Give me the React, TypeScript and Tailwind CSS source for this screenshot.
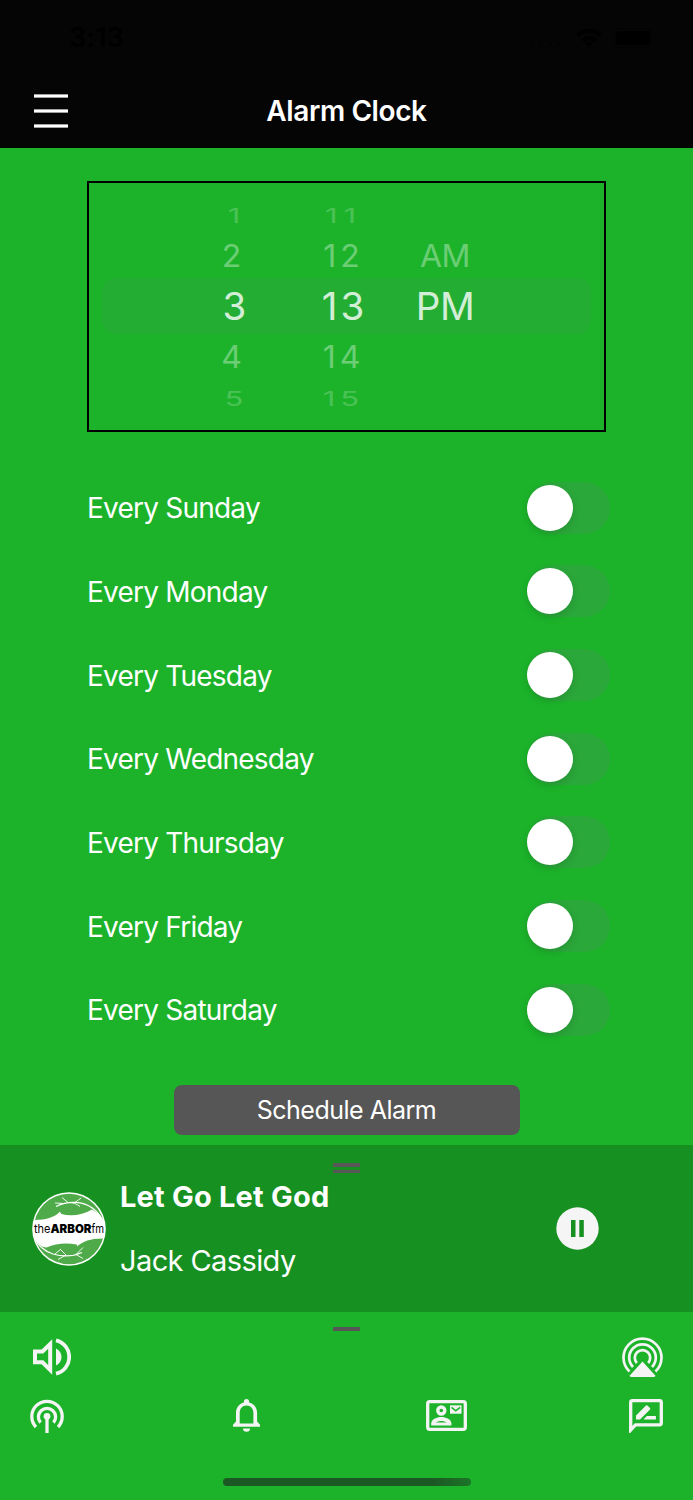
import { useState } from 'react';
import clsx from 'clsx';

const days = ['Sunday', 'Monday', 'Tuesday', 'Wednesday', 'Thursday', 'Friday', 'Saturday'];

const pickerRows = [
  { hour: '1', minute: '11', period: '', row: 'h-[30px] text-[31px] opacity-20', squash: 'scale-y-[0.66]', hourShift: 'pr-[2px]', minuteShift: 'tracking-[6px] pl-[1px]' },
  { hour: '2', minute: '12', period: 'AM', row: 'h-[51px] text-[32px] opacity-35', squash: 'scale-y-[0.97]', hourShift: 'pr-[7px]', minuteShift: 'tracking-[4px] pl-[1px]' },
  { hour: '3', minute: '13', period: 'PM', row: 'h-[50px] text-[38.5px] opacity-80', squash: 'scale-y-100', hourShift: 'pr-[1px]', minuteShift: 'tracking-[3px] pl-[3px]' },
  { hour: '4', minute: '14', period: '', row: 'h-[52px] text-[32px] opacity-35', squash: 'scale-y-[0.97]', hourShift: 'pr-[7px]', minuteShift: 'tracking-[4px] pl-[1px]' },
  { hour: '5', minute: '15', period: '', row: 'h-[29px] text-[31px] opacity-20', squash: 'scale-y-[0.66]', hourShift: 'pr-[2px]', minuteShift: 'tracking-[5px] pl-[1px]' },
];

const StatusBar = () => (
  <div className="flex h-[75px] items-center justify-between pl-[69px] pr-[36px] text-black">
    <span className="text-[27px] font-semibold leading-none tracking-[0.2px]">3:13</span>
    <div className="flex items-center gap-[12px]">
      <svg width="43" height="4" viewBox="0 0 43 4" fill="currentColor" fillOpacity="0.5" className="mt-[14px] -mr-[2px]">
        <circle cx="9" cy="2" r="1.800" />
        <circle cx="18" cy="2" r="1.800" />
        <circle cx="27" cy="2" r="1.800" />
        <circle cx="36" cy="2" r="1.800" />
      </svg>
      <svg width="26" height="20" viewBox="0 0 26 20" fill="none" stroke="currentColor" strokeWidth="4">
        <path d="M1.500 7.500a16.500 16.500 0 0 1 23 0" />
        <path d="M6.500 12.500a9.500 9.500 0 0 1 13 0" />
        <path d="M9.500 15.500 13 19l3.500-3.500a5 5 0 0 0-7 0z" fill="currentColor" stroke="none" />
      </svg>
      <svg width="43" height="20" viewBox="0 0 43 20" fill="currentColor">
        <rect x="0.500" y="0.500" width="37" height="19" rx="5" fill="none" stroke="currentColor" strokeOpacity="0.4" />
        <rect x="2" y="3" width="34" height="14" rx="3.500" />
        <path d="M40 7v6q2.500-3 0-6z" fillOpacity="0.5" />
      </svg>
    </div>
  </div>
);

const Header = () => (
  <header className="h-[148px] bg-[#050505]">
    <StatusBar />
    <div className="grid h-[71px] grid-cols-[67px_1fr_67px] items-center">
      <button className="flex flex-col gap-[11px] pl-[33.5px]" aria-label="Menu">
        <span className="h-[4px] w-[34px] border-y border-[#a0a0a0] bg-white" />
        <span className="h-[4px] w-[34px] border-y border-[#a0a0a0] bg-white" />
        <span className="h-[4px] w-[34px] border-y border-[#a0a0a0] bg-white" />
      </button>
      <h1 className="text-center text-[28px] font-semibold leading-none tracking-[-0.4px]">Alarm Clock</h1>
    </div>
  </header>
);

const TimePicker = () => (
  <div className="relative mx-auto h-[251px] w-[519px] border-2 border-black pt-[17px]">
    <div className="absolute left-[13px] top-[95px] h-[56px] w-[489px] rounded-[14px] bg-[#24ad33]" />
    {pickerRows.map(({ hour, minute, period, row, squash, hourShift, minuteShift }) => (
      <div key={hour} className={clsx('relative grid grid-cols-[90px_112px_104px_100px] items-center text-center leading-none', row)}>
        <span />
        <span className={clsx(hourShift, squash)}>{hour}</span>
        <span className={clsx(minuteShift, squash)}>{minute}</span>
        <span className={clsx('tracking-[-0.5px]', squash)}>{period}</span>
      </div>
    ))}
  </div>
);

const DayToggle = ({ day }: { day: string }) => {
  const [enabled, setEnabled] = useState(false);

  return (
    <div className="flex h-[83.67px] items-center justify-between pl-[87px] pr-[83px]">
      <span className="pt-px text-[28px] leading-none tracking-[-0.78px]">Every {day}</span>
      <button
        role="switch"
        aria-checked={enabled}
        aria-label={`Every ${day}`}
        onClick={() => setEnabled(!enabled)}
        className={clsx('flex h-[52px] w-[83px] items-center rounded-full', enabled ? 'justify-end bg-[#34c759]' : 'bg-[#2ba83a]')}
      >
        <span className="size-[46px] rounded-full bg-white shadow-[0_3px_8px_rgba(0,0,0,0.14)]" />
      </button>
    </div>
  );
};

const StationLogo = () => (
  <svg width="74" height="74" viewBox="0 0 74 74">
    <defs>
      <clipPath id="disc">
        <circle cx="37" cy="37" r="35.3" />
      </clipPath>
    </defs>
    <circle cx="37" cy="37" r="36.800" fill="#fff" />
    <g clipPath="url(#disc)">
      <g fill="#4fab49">
        <path d="M2 28C7 12 18 1 37 0c18 1 32 10 35 29-3-5-7-9-12-11.500-9 5-20 7.500-30.500 4.500q-1.200-.6-1.500-2.500C23 25 15 28 2 28z" />
        <path d="M1 45c5 7 8 10 13.500 10.500C24 51 35 50.500 44.500 52.500q1 .5.500 2C51 49 60 46 73 46.500 70 63 56 74 37 74S4 63 1 45z" />
      </g>
      <g fill="none" stroke="#fff">
        <path d="M24 14.500c12-6 27-5.500 37 2 5 4 8.500 8.500 11 14.500" strokeWidth="1.300" />
        <path d="M32 11.500l-9-.5M36 10.500l-6-5M43 10.500l6-4.500M36 10.500c5 0 9 1.500 12 4" strokeWidth=".9" />
        <path d="M1 45c6 9 11 14 20 17 10 3 20 2.500 29-1.500" strokeWidth="1.300" />
        <path d="M23 62l6-5M34 63l-6-6M34 63l-8 4.500M44 62.500l7-7M44 62.500l7 4" strokeWidth=".9" />
      </g>
    </g>
    <g fontFamily="Inter, sans-serif" fontSize="12" fill="#000">
      <text x="2" y="41" textLength="16.500" lengthAdjust="spacingAndGlyphs">the</text>
      <text x="18.500" y="41" fontWeight="900" textLength="41" lengthAdjust="spacingAndGlyphs">ARBOR</text>
      <text x="59.500" y="41" textLength="12.500" lengthAdjust="spacingAndGlyphs">fm</text>
    </g>
  </svg>
);

const Player = () => (
  <section className="flex h-[167px] flex-col bg-[#179022] pt-[18px]">
    <div className="flex flex-col items-center gap-[3px]">
      <span className="h-[3.500px] w-[27px] bg-[#575757]" />
      <span className="h-[3.500px] w-[27px] bg-[#575757]" />
    </div>
    <div className="flex h-[111px] items-center pl-[32px] pr-[94px]">
      <StationLogo />
      <div className="ml-[14px] flex-1 pt-px">
        <p className="text-[29px] font-bold leading-[64px] tracking-[0.2px]">Let Go Let God</p>
        <p className="text-[29px] leading-[64px] tracking-[-0.6px]">Jack Cassidy</p>
      </div>
      <button aria-label="Pause">
        <svg width="43" height="43" viewBox="0 0 43 43">
          <circle cx="21.500" cy="21.500" r="21.200" fill="#f5f5f5" />
          <path d="M15 13h4.500v17H15zM23.300 13h4.500v17h-4.500z" fill="#179022" />
        </svg>
      </button>
    </div>
  </section>
);

const VolumeIcon = () => (
  <svg width="38" height="38" viewBox="0 0 38 38" fill="none">
    <path d="M2 13.500h7.500L17.200 6v26L9.500 24.300H2z" stroke="currentColor" strokeWidth="4" />
    <path d="M23 10.500v17c3.500-1.700 5.500-4.900 5.500-8.500S26.500 12.200 23 10.500z" fill="currentColor" />
    <path d="M23 2.300c8 1.900 13.200 8.700 13.200 16.700S31 33.800 23 35.700" stroke="currentColor" strokeWidth="3.800" />
  </svg>
);

const AirplayIcon = () => (
  <svg width="41" height="41" viewBox="0 0 41 41" fill="none" stroke="currentColor" strokeWidth="2.700">
    <path d="M7.500 34.500a19 19 0 1 1 26 0" />
    <path d="M11 30a13.300 13.300 0 1 1 19 0" />
    <path d="M14.800 26a7.700 7.700 0 1 1 11.400 0" />
    <path d="M20.500 24.500 33 38.300q.8 1.700-1 1.700H9q-1.800 0-1-1.700z" fill="currentColor" stroke="none" />
  </svg>
);

const PodcastIcon = () => (
  <svg width="34" height="34" viewBox="0 0 34 34" fill="none" stroke="currentColor" strokeWidth="3.300">
    <path d="M6 28A15.200 15.200 0 1 1 28 28" />
    <path d="M10.500 23.600a8.600 8.600 0 1 1 13 0" />
    <path d="M17 18v16" />
    <circle cx="17" cy="17.300" r="3.400" fill="currentColor" stroke="none" />
  </svg>
);

const BellIcon = () => (
  <svg width="27" height="33" viewBox="0 0 27 33" fill="currentColor">
    <path fillRule="evenodd" d="M13.500 0a2.600 2.600 0 0 1 2.600 2.600v1c5 1.200 8 5.300 8 10.400v8.500l2.900 3.200v2H0v-2l3-3.200V14C3 8.900 6 4.800 10.900 3.600v-1A2.600 2.600 0 0 1 13.500 0zM13.500 6.500C9.200 6.500 6.700 9.800 6.700 14v10.500h13.700V14c0-4.200-2.600-7.500-6.900-7.500z" />
    <path d="M10 29.500h7a3.500 3.300 0 0 1-7 0z" />
  </svg>
);

const ContactIcon = () => (
  <svg width="41" height="31" viewBox="0 0 41 31" fill="none">
    <rect x="1.700" y="1.700" width="37.600" height="27.600" rx="2" stroke="currentColor" strokeWidth="3.300" />
    <circle cx="15.300" cy="10.500" r="3.500" stroke="currentColor" strokeWidth="3.400" />
    <path fillRule="evenodd" d="M5.200 25.500v-2.200c0-4 5.500-6.300 10.100-6.300s10.100 2.300 10.100 6.300v2.200zM10 22.600h10.600c-3.200-2-7.400-2-10.600 0z" fill="currentColor" />
    <path d="M24 5.300h11.500v8.400H24z" fill="currentColor" />
    <path d="m25.500 7.300 4.300 3.500 4.300-3.500" stroke="#1cb32a" strokeWidth="1.600" />
  </svg>
);

const ReviewIcon = () => (
  <svg width="34" height="34" viewBox="0 0 34 34" fill="none">
    <path d="M1.700 31V3.500q0-1.800 1.800-1.800h27q1.800 0 1.800 1.800V24q0 1.800-1.800 1.800H6.500z" stroke="currentColor" strokeWidth="3.300" />
    <path d="M0 27.500h5L0 34z" fill="currentColor" />
    <path d="M7 20.500v-4.100L17 6.500q.7-.7 1.400 0l2.600 2.600q.7.700 0 1.400L11 20.500zM14.500 20.500l3.400-3.600h9v3.600z" fill="currentColor" />
  </svg>
);

const BottomBar = () => (
  <footer className="flex h-[188px] flex-col items-center pt-[15px] text-[#f4f4f4]">
    <span className="h-[3.500px] w-[27px] bg-[#575757]" />
    <div className="mt-[6px] flex w-full items-center justify-between pl-[33px] pr-[30px]">
      <VolumeIcon />
      <AirplayIcon />
    </div>
    <div className="mt-[21px] flex h-[34px] w-full items-center pl-[30px]">
      <PodcastIcon />
      <div className="ml-[169px]"><BellIcon /></div>
      <div className="ml-[166px]"><ContactIcon /></div>
      <div className="ml-[162px]"><ReviewIcon /></div>
    </div>
    <div className="mt-[45px] h-[8px] w-[248px] rounded-full bg-gradient-to-r from-[#1c5824] from-85% to-[#1b7627]" />
  </footer>
);

const App = () => {
  return (
    <div className="h-[1500px] w-[693px] overflow-hidden bg-[#1cb32a] font-['Inter',sans-serif] text-white">
      <Header />
      <main className="h-[997px] pt-[33px]">
        <TimePicker />
        <div className="mt-[34px]">
          {days.map(day => (
            <DayToggle key={day} day={day} />
          ))}
        </div>
        <button className="mx-auto mt-[33px] block h-[50px] w-[346px] rounded-[8px] bg-[#565656] pt-[2px] text-[25px] leading-none tracking-[-0.5px]">
          Schedule Alarm
        </button>
      </main>
      <Player />
      <BottomBar />
    </div>
  );
};

export default App;
